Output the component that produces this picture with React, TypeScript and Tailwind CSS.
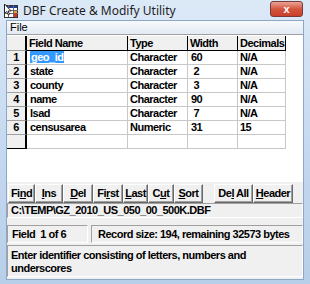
import React from 'react';

const rows = [
  { n: 1, name: 'geo_id', type: 'Character', width: '60', dec: 'N/A' },
  { n: 2, name: 'state', type: 'Character', width: ' 2', dec: 'N/A' },
  { n: 3, name: 'county', type: 'Character', width: ' 3', dec: 'N/A' },
  { n: 4, name: 'name', type: 'Character', width: '90', dec: 'N/A' },
  { n: 5, name: 'lsad', type: 'Character', width: ' 7', dec: 'N/A' },
  { n: 6, name: 'censusarea', type: 'Numeric', width: '31', dec: '15' },
];

const cols = 'grid grid-cols-[20px_101px_60px_50px_48px]';

function AppIcon() {
  return (
    <svg width="16" height="16" viewBox="0 0 16 16" className="shrink-0">
      <rect x="1.5" y="2.5" width="13" height="12" fill="#fff" stroke="#333" />
      <rect x="2" y="3" width="12" height="2" fill="#1f3f9f" />
      <path d="M1 7.5h14M1 10.5h14M5.5 2v12M10.5 2v12" stroke="#666" strokeWidth="1" />
      <rect x="11" y="8" width="3" height="2" fill="#f59a1c" />
      <rect x="11" y="11" width="3" height="3" fill="#e0301e" />
      <path d="M1.5 1v9.5l2.2-2 1.6 3.4 1.3-.6-1.6-3.3H8.2z" fill="#fff" stroke="#000" strokeWidth="0.8" />
    </svg>
  );
}

function Btn({ pre, u, post, w }: { pre: string; u: string; post: string; w: string }) {
  return (
    <div
      className={`${w} h-[19px] flex items-center justify-center bg-[#f0f0f0] border border-t-white border-l-white border-r-[#696969] border-b-[#696969] shadow-[inset_-1px_-1px_0_#a0a0a0] text-[11px] font-bold tracking-[-0.5px] text-black`}
    >
      <span>
        {pre}
        <span className="underline underline-offset-1">{u}</span>
        {post}
      </span>
    </div>
  );
}

const sunken = 'border border-t-[#a0a0a0] border-l-[#a0a0a0] border-r-white border-b-white';

export default function App() {
  return (
    <div
      className="w-[310px] h-[284px] flex flex-col bg-gradient-to-b from-[#dce9f7] via-[#c5d9f0] to-[#b8cfe9] overflow-hidden"
      style={{ fontFamily: '"Liberation Sans", Arial, sans-serif' }}
    >
      {/* title bar */}
      <div className="h-[21px] shrink-0 flex items-center pl-[3px] relative">
        <AppIcon />
        <span
          className="ml-[4px] text-[12px] text-[#1e1e1e]"
          style={{ fontFamily: '"Noto Sans", "Open Sans", sans-serif' }}
        >
          DBF Create &amp; Modify Utility
        </span>
        <div className="absolute right-[7px] top-[1px] w-[33px] h-[16px] rounded-[3px] border border-[#7a3a3a] bg-gradient-to-b from-[#e8a395] via-[#d4553f] to-[#c8402c] flex items-center justify-center">
          <span className="text-white text-[11px] font-bold leading-none">x</span>
        </div>
      </div>

      {/* client area */}
      <div className="mx-[7px] h-[258px] shrink-0 flex flex-col bg-[#f0f0f0] shadow-[0_0_0_1px_#8da7c7]">
        <div className="h-[13px] shrink-0 flex items-center pl-[3px] bg-gradient-to-b from-[#f7f9fc] to-[#e3eaf3] text-[11px] text-black">
          File
        </div>

        {/* field grid */}
        <div className="h-[148px] shrink-0 bg-white border-t border-[#a0a0a0] pt-[1px] text-[11px] font-bold tracking-[-0.5px]">
          <div className="w-fit">
            <div className={`${cols} h-[15px]`}>
              <div className="bg-[#f0f0f0] border-r-2 border-b border-r-black border-b-[#a0a0a0]" />
              {['Field Name', 'Type', 'Width', 'Decimals'].map((h) => (
                <div
                  key={h}
                  className="bg-[#f0f0f0] border-r border-b border-black pl-[2px] leading-[14px] whitespace-nowrap"
                >
                  {h}
                </div>
              ))}
            </div>
            {rows.map((r) => (
              <div key={r.n} className={`${cols} h-[14px]`}>
                <div className="bg-[#f0f0f0] border-r-2 border-b border-r-black border-b-[#a0a0a0] text-center leading-[13px]">
                  {r.n}
                </div>
                <div className="border-r border-b border-[#c8c8c8] pl-[3px] leading-[13px]">
                  {r.n === 1 ? <span className="bg-[#3399ff] text-white px-[1px]">{r.name}</span> : r.name}
                </div>
                <div className="border-r border-b border-[#c8c8c8] pl-[2px] leading-[13px]">{r.type}</div>
                <div className="border-r border-b border-[#c8c8c8] pl-[3px] leading-[13px] whitespace-pre">{r.width}</div>
                <div className="border-r border-b border-[#c8c8c8] pl-[2px] leading-[13px]">{r.dec}</div>
              </div>
            ))}
            <div className={`${cols} h-[14px]`}>
              <div className="bg-[#f0f0f0] border-r-2 border-b border-r-black border-b-black" />
              <div className="border-r border-b border-[#c8c8c8]" />
              <div className="border-r border-b border-[#c8c8c8]" />
              <div className="border-r border-b border-[#c8c8c8]" />
              <div className="border-r border-b border-[#c8c8c8]" />
            </div>
          </div>
        </div>

        {/* navigation buttons */}
        <div className="mt-[2px] shrink-0 flex items-center pl-[1px]">
          <Btn pre="Fi" u="n" post="d" w="w-[27px]" />
          <Btn pre="" u="I" post="ns" w="w-[28px]" />
          <Btn pre="" u="D" post="el" w="w-[30px]" />
          <Btn pre="Fi" u="r" post="st" w="w-[30px]" />
          <Btn pre="" u="L" post="ast" w="w-[25px]" />
          <Btn pre="C" u="u" post="t" w="w-[26px]" />
          <Btn pre="" u="S" post="ort" w="w-[29px]" />
          <div className="w-[11px]" />
          <Btn pre="De" u="l" post=" All" w="w-[39px]" />
          <Btn pre="" u="H" post="eader" w="w-[40px]" />
        </div>

        <div className={`${sunken} shrink-0 h-[15px] pl-[3px] text-[11px] font-bold tracking-[-0.5px] leading-[13px]`}>
          C:\TEMP\GZ_2010_US_050_00_500K.DBF
        </div>

        <div className="mt-[7px] shrink-0 flex gap-[3px] text-[11px] font-bold tracking-[-0.5px]">
          <div className={`${sunken} w-[81px] h-[18px] pl-[4px] leading-[16px] whitespace-pre`}>
            Field  1 of 6
          </div>
          <div className={`${sunken} flex-1 h-[18px] pl-[6px] leading-[16px] whitespace-nowrap`}>
            Record size: 194, remaining 32573 bytes
          </div>
        </div>

        <div className={`${sunken} mt-[2px] h-[32px] shrink-0 px-[3px] pt-[3px] text-[11px] font-bold tracking-[-0.5px] leading-[13px]`}>
          Enter identifier consisting of letters, numbers and underscores
        </div>
      </div>
    </div>
  );
}
